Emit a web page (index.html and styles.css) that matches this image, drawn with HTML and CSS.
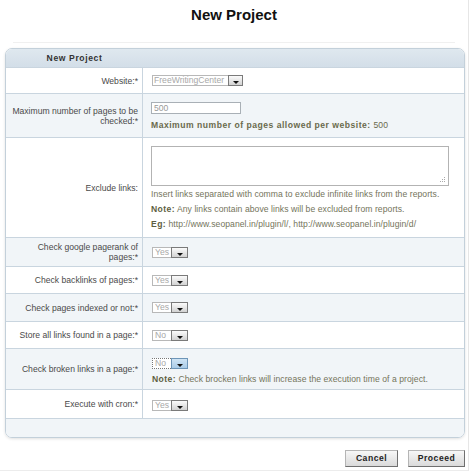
FILE: index.html
```html
<!DOCTYPE html>
<html>
<head>
<meta charset="utf-8">
<title>New Project</title>
<link rel="stylesheet" href="styles.css">
</head>
<body>
<div class="page">
  <h1 class="title">New Project</h1>
  <div class="panel">
    <div class="panel-head"><span class="head-label">New Project</span></div>

    <div class="row">
      <div class="label">Website:*</div>
      <div class="value v-website">
        <span class="select select-wide"><span class="select-text">FreeWritingCenter</span><span class="select-btn"><svg width="6" height="3" viewBox="0 0 6 3"><path d="M0 0H6L3 3Z" fill="#111"/></svg></span></span>
      </div>
    </div>

    <div class="row alt">
      <div class="label">Maximum number of pages to be<br>checked:*</div>
      <div class="value v-max">
        <input class="text-input" type="text" value="500">
        <div class="limit">Maximum number of pages allowed per website: <span>500</span></div>
      </div>
    </div>

    <div class="row">
      <div class="label">Exclude links:</div>
      <div class="value v-exclude">
        <span class="area-wrap"><textarea class="area"></textarea><svg class="grip" width="5" height="5" viewBox="0 0 5 5"><rect x="4" y="0" width="1" height="1" fill="#aaa"/><rect x="2" y="2" width="1" height="1" fill="#aaa"/><rect x="4" y="2" width="1" height="1" fill="#aaa"/><rect x="0" y="4" width="1" height="1" fill="#aaa"/><rect x="2" y="4" width="1" height="1" fill="#aaa"/><rect x="4" y="4" width="1" height="1" fill="#aaa"/></svg></span>
        <div class="help">
          <div>Insert links separated with comma to exclude infinite links from the reports.</div>
          <div><b>Note:</b> Any links contain above links will be excluded from reports.</div>
          <div><b>Eg:</b> http://www.seopanel.in/plugin/l/, http://www.seopanel.in/plugin/d/</div>
        </div>
      </div>
    </div>

    <div class="row alt">
      <div class="label">Check google pagerank of<br>pages:*</div>
      <div class="value v-google">
        <span class="select"><span class="select-text">Yes</span><span class="select-btn"><svg width="6" height="3" viewBox="0 0 6 3"><path d="M0 0H6L3 3Z" fill="#111"/></svg></span></span>
      </div>
    </div>

    <div class="row">
      <div class="label">Check backlinks of pages:*</div>
      <div class="value v-back">
        <span class="select"><span class="select-text">Yes</span><span class="select-btn"><svg width="6" height="3" viewBox="0 0 6 3"><path d="M0 0H6L3 3Z" fill="#111"/></svg></span></span>
      </div>
    </div>

    <div class="row alt">
      <div class="label">Check pages indexed or not:*</div>
      <div class="value v-indexed">
        <span class="select"><span class="select-text">Yes</span><span class="select-btn"><svg width="6" height="3" viewBox="0 0 6 3"><path d="M0 0H6L3 3Z" fill="#111"/></svg></span></span>
      </div>
    </div>

    <div class="row">
      <div class="label">Store all links found in a page:*</div>
      <div class="value v-store">
        <span class="select"><span class="select-text">No</span><span class="select-btn"><svg width="6" height="3" viewBox="0 0 6 3"><path d="M0 0H6L3 3Z" fill="#111"/></svg></span></span>
      </div>
    </div>

    <div class="row alt">
      <div class="label">Check broken links in a page:*</div>
      <div class="value v-broken">
        <span class="select select-focus"><span class="select-text">No</span><span class="select-btn"><svg width="6" height="3" viewBox="0 0 6 3"><path d="M0 0H6L3 3Z" fill="#111"/></svg></span></span>
        <div class="note"><b>Note:</b> Check brocken links will increase the execution time of a project.</div>
      </div>
    </div>

    <div class="row">
      <div class="label">Execute with cron:*</div>
      <div class="value v-cron">
        <span class="select"><span class="select-text">Yes</span><span class="select-btn"><svg width="6" height="3" viewBox="0 0 6 3"><path d="M0 0H6L3 3Z" fill="#111"/></svg></span></span>
      </div>
    </div>

    <div class="row alt row-foot"></div>
  </div>

  <div class="actions">
    <button class="btn btn-cancel" type="button">Cancel</button>
    <button class="btn btn-proceed" type="button">Proceed</button>
  </div>
</div>
</body>
</html>
```

FILE: styles.css
```css
* {
  box-sizing: border-box;
}

body {
  margin: 0;
  background: #fff;
  font-family: "Liberation Sans", Arial, sans-serif;
  color: #444;
}

.page {
  width: 469px;
  height: 471px;
  border-right: 1px solid #e6e6e6;
  border-bottom: 1px solid #ececec;
}

.title {
  margin: 0 13px;
  padding: 6px 0 18px;
  font: bold 15px/18px "Liberation Sans", Arial, sans-serif;
  color: #111;
  text-align: center;
  border-bottom: 1px solid #f0f0f0;
}

.panel {
  margin: 5px 0 0 5px;
  width: 460px;
  border: 1px solid #c3d0da;
  border-radius: 7px;
  overflow: hidden;
  box-shadow: 0 1px 3px rgba(0, 0, 0, 0.12);
}

.panel-head {
  height: 18px;
  background: linear-gradient(#dfe8ef, #d3dee8);
  display: grid;
  grid-template-columns: 137px 1fr;
}

.head-label {
  font-size: 8.6px;
  line-height: 18px;
  font-weight: bold;
  letter-spacing: 0.6px;
  text-align: center;
  color: #333;
}

.row {
  display: grid;
  grid-template-columns: 137px 1fr;
  border-top: 1px solid #c9d5df;
  background: #fff;
}

.row.alt {
  background: #f1f5f8;
}

.row-foot {
  height: 19px;
}

.label {
  border-right: 1px solid #c9d5df;
  display: flex;
  align-items: center;
  justify-content: flex-end;
  text-align: right;
  padding: 0 4px 0 2px;
  font-size: 8.6px;
  line-height: 10px;
  color: #4a4a4a;
}

.value {
  padding: 7px 8px;
  display: flex;
  flex-direction: column;
  align-items: flex-start;
  justify-content: center;
}

.v-website { padding: 7px 8px 7px 9px; }
.v-max { padding: 8px 8px 7px 8px; }
.v-exclude { padding: 8px 8px 5px 8px; }
.v-google { padding: 9px 8px 8px 9px; }
.v-back { padding: 8px 8px 7px 9px; }
.v-indexed { padding: 8px 8px 8px 9px; }
.v-store { padding: 8px 8px 7px 9px; }
.v-broken { padding: 9px 8px 5px 9px; }
.v-cron { padding: 10px 8px 7px 9px; }

/* select imitation */
.select {
  display: inline-flex;
  height: 11px;
}

.select-text {
  width: 19px;
  border: 1px solid #b8b8b8;
  border-right: none;
  background: #fff;
  font-size: 8.6px;
  line-height: 9px;
  color: #a8a8a8;
  padding-left: 2px;
  white-space: nowrap;
  overflow: hidden;
}

.select-wide .select-text {
  width: 76px;
  padding-left: 1px;
}

.select-btn {
  width: 17px;
  border: 1px solid #7a7a7a;
  background: linear-gradient(#fbfbfb, #d2d2d2);
  display: flex;
  align-items: flex-end;
  justify-content: center;
  padding-bottom: 1px;
}

.select-wide .select-btn {
  width: 15px;
}

.select-focus .select-text {
  border: 1px dotted #777;
  border-right: none;
}

.select-focus .select-btn {
  border-color: #6d95b8;
  background: linear-gradient(#cfe4f5, #a9cbe7);
}

.text-input {
  width: 90px;
  height: 12px;
  margin: 0;
  padding: 0 2px;
  border: 1px solid #a9b0b6;
  background: #fff;
  font: 8.6px/10px "Liberation Sans", Arial, sans-serif;
  color: #999;
}

.limit {
  margin-top: 6px;
  font-size: 8.6px;
  line-height: 10px;
  font-weight: bold;
  letter-spacing: 0.5px;
  color: #6a6a4c;
}

.limit span {
  font-weight: normal;
  letter-spacing: 0;
}

.area-wrap {
  position: relative;
  display: block;
  width: 298px;
  height: 40px;
}

.area {
  display: block;
  width: 298px;
  height: 40px;
  margin: 0;
  border: 1px solid #b3b3b3;
  background: #fff;
  resize: none;
}

.grip {
  position: absolute;
  right: 4px;
  bottom: 4px;
}

.help {
  margin-top: 1px;
  font-size: 8.6px;
  line-height: 15px;
  letter-spacing: 0.06px;
  color: #74745b;
}

.help b,
.note b {
  color: #5e5e42;
  letter-spacing: 0.4px;
}

.note {
  margin-top: 5px;
  font-size: 8.6px;
  line-height: 10px;
  letter-spacing: 0.06px;
  color: #74745b;
}

.actions {
  width: 465px;
  margin-top: 12px;
  display: flex;
  justify-content: flex-end;
  gap: 10px;
}

.btn {
  height: 17px;
  margin: 0;
  padding: 0;
  border: 1px solid;
  border-color: #b5b5b5 #6f6f6f #6f6f6f #b5b5b5;
  background: linear-gradient(#f7f7f7, #dadada);
  font: bold 8.6px/15px "Liberation Sans", Arial, sans-serif;
  letter-spacing: 0.5px;
  color: #222;
}

.btn-cancel {
  width: 53px;
}

.btn-proceed {
  width: 57px;
}
```
